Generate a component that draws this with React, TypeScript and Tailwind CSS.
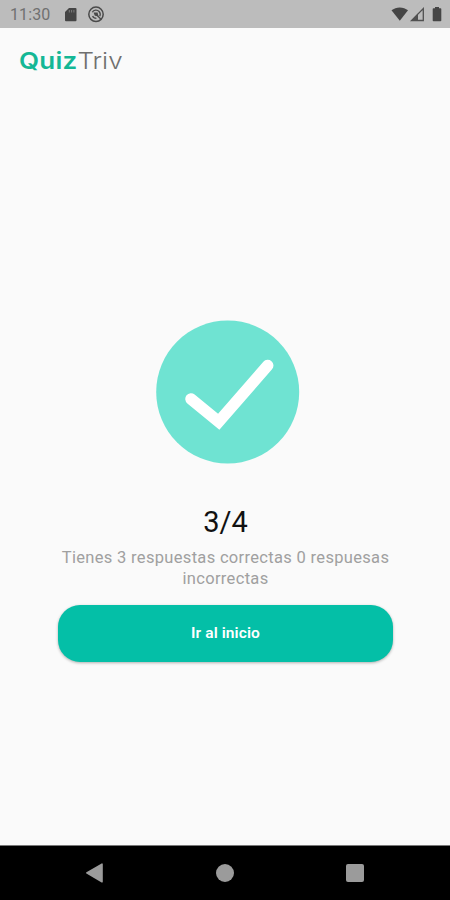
function StatusBar() {
  return (
    <div className="flex h-7 shrink-0 items-center justify-between bg-[#bcbcbc] pl-[10px] pr-2 text-[#4a4a4a]">
      <div className="flex items-center">
        <span className="w-[60px] pt-[2px] text-base leading-none tracking-[0.1px] text-[#707070]">11:30</span>
        <svg width="60" height="28" viewBox="60 0 60 28" className="-ml-[10px]">
          <path d="M69 8h6.500a1 1 0 0 1 1 1v11.300a1 1 0 0 1-1 1h-9.500a1 1 0 0 1-1-1V12z" fill="#454545" />
          <path d="M69.300 10v2.500M71.600 10v2.500M73.900 10v2.500" stroke="#8a8a8a" strokeWidth="0.8" />
          <circle cx="96" cy="14.300" r="7.200" fill="none" stroke="#4a4a4a" strokeWidth="1.500" />
          <path d="M92.300 12.200c1.400-2.500 5-2.700 6.800-.7 1.300 1.500 1.400 3.300.7 4.800" fill="none" stroke="#4a4a4a" strokeWidth="1.300" />
          <path d="M96 14.300l5 5M92.600 16c.6 1.500 2 2.300 3.800 2.300" fill="none" stroke="#4a4a4a" strokeWidth="1.300" />
          <path d="M93.600 12.500h4l.8 3.800-3.600-.6z" fill="#4a4a4a" />
        </svg>
      </div>
      <svg width="52" height="28" viewBox="390 0 52 28">
        <path d="M391.500 10.300C396 6.400 403.500 6.400 408 10.300L399.800 20.800z" fill="#454545" />
        <path d="M423.300 8.500V20.500H411.500z" fill="none" stroke="#505050" strokeWidth="1.300" />
        <path d="M418 13.500V20.500H411.500z" fill="#505050" />
        <path d="M435 7h4v1.300h1.500a.8.8 0 0 1 .8.8v11.400a.8.8 0 0 1-.8.8h-7a.8.8 0 0 1-.8-.8V9.100a.8.8 0 0 1 .8-.8H435z" fill="#454545" />
      </svg>
    </div>
  );
}

function Logo() {
  return (
    <header className="flex h-16 shrink-0 items-center pl-[19px] pt-0.5 font-['Inter',sans-serif] text-[23px] leading-none">
      <div className="flex origin-left scale-x-[1.13]">
        <span className="font-semibold tracking-[0.2px] text-[#14b795]">Quiz</span>
        <span className="font-light text-[#6f6f6f]">Triv</span>
      </div>
    </header>
  );
}

function NavBar() {
  return (
    <nav className="flex h-[55px] shrink-0 items-center justify-between border-t border-[#777] bg-black px-[85px]">
      <svg width="20" height="22" viewBox="0 0 20 22" fill="#9b9b9b">
        <path d="M1.400 10.200L16.600 1.400a.8.8 0 0 1 1.200.7v17.600a.8.8 0 0 1-1.200.7L1.400 11.500a.8.8 0 0 1 0-1.300z" />
      </svg>
      <span className="mr-px size-[18px] rounded-full bg-[#9b9b9b]" />
      <span className="mr-px size-[18px] rounded-[2px] bg-[#9b9b9b]" />
    </nav>
  );
}

export default function App() {
  const correct = 3;
  const total = 4;

  return (
    <div className="flex h-[900px] w-[450px] flex-col overflow-hidden bg-[#fafafa] font-['Roboto',sans-serif]">
      <StatusBar />
      <Logo />

      <main className="flex flex-1 flex-col items-center pl-[58px] pr-[57px] pt-[227.500px] text-center">
        <svg width="144" height="144" viewBox="0 0 144 144" className="ml-1 shrink-0">
          <circle cx="71.700" cy="72" r="71.500" fill="#6fe3d2" />
          <path
            d="M35 79L62.700 101.700L111.700 45.500"
            fill="none"
            stroke="#fff"
            strokeWidth="11.500"
            strokeLinecap="round"
            strokeLinejoin="miter"
          />
        </svg>

        <h1 className="mt-10 text-[29px] leading-9 text-[#111]">
          {correct}/{total}
        </h1>
        <p className="mt-[7.500px] text-[16.500px] leading-[21px] tracking-[0.32px] text-[#a0a0a0]">
          Tienes {correct} respuestas correctas 0 respuesas incorrectas
        </p>

        <button className="mt-[15.500px] h-[57px] w-full rounded-[22px] bg-[#04bfa7] pt-px text-[15.500px] font-semibold tracking-[0.1px] text-white shadow-[0_1px_3px_rgba(0,0,0,0.3)]">
          Ir al inicio
        </button>
      </main>

      <NavBar />
    </div>
  );
}
